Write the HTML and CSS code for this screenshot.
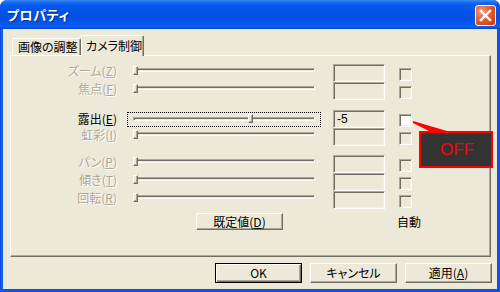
FILE: index.html
```html
<!DOCTYPE html>
<html lang="ja">
<head>
<meta charset="utf-8">
<title>プロパティ</title>
<link rel="stylesheet" href="styles.css">
</head>
<body>
<div class="win">
  <div class="titlebar">
    <span class="title">プロパティ</span>
    <div class="close">
      <svg width="21" height="21" viewBox="0 0 21 21">
        <path d="M6 6 L15 15 M15 6 L6 15" stroke="#fff" stroke-width="2.4" stroke-linecap="square"/>
      </svg>
    </div>
  </div>
  <div class="client">
    <div class="tabs">
      <div class="tab">画像の調整</div>
      <div class="tab active">カメラ制御</div>
    </div>
    <div class="panel">
      <div class="group">
        <div class="row dis">
          <div class="lbl">ズーム(<u>Z</u>)</div>
          <div class="slider"><div class="track"></div><div class="thumb"></div></div>
          <div class="edit"></div>
          <div class="cb"></div>
        </div>
        <div class="row dis">
          <div class="lbl">焦点(<u>F</u>)</div>
          <div class="slider"><div class="track"></div><div class="thumb"></div></div>
          <div class="edit"></div>
          <div class="cb"></div>
        </div>
      </div>
      <div class="group g2">
        <div class="row en">
          <div class="lbl">露出(<u>E</u>)</div>
          <div class="slider focus"><div class="track"></div><div class="thumb" style="left:120px"></div></div>
          <div class="edit">-5</div>
          <div class="cb"></div>
        </div>
        <div class="row dis">
          <div class="lbl">虹彩(<u>I</u>)</div>
          <div class="slider"><div class="track"></div><div class="thumb"></div></div>
          <div class="edit"></div>
          <div class="cb"></div>
        </div>
      </div>
      <div class="group g3">
        <div class="row dis">
          <div class="lbl">パン(<u>P</u>)</div>
          <div class="slider"><div class="track"></div><div class="thumb"></div></div>
          <div class="edit"></div>
          <div class="cb"></div>
        </div>
        <div class="row dis">
          <div class="lbl">傾き(<u>T</u>)</div>
          <div class="slider"><div class="track"></div><div class="thumb"></div></div>
          <div class="edit"></div>
          <div class="cb"></div>
        </div>
        <div class="row dis">
          <div class="lbl">回転(<u>R</u>)</div>
          <div class="slider"><div class="track"></div><div class="thumb"></div></div>
          <div class="edit"></div>
          <div class="cb"></div>
        </div>
      </div>
      <div class="footer">
        <div class="btn defbtn">既定値(<u>D</u>)</div>
        <div class="auto">自動</div>
      </div>
    </div>
    <div class="buttons">
      <div class="btn ok">OK</div>
      <div class="btn">キャンセル</div>
      <div class="btn">適用(<u>A</u>)</div>
    </div>
  </div>
  <svg class="tail" width="40" height="16" viewBox="0 0 40 16">
    <polygon points="3,3 37,13 19,13 3,5" fill="#ff0000"/>
  </svg>
  <div class="callout">OFF</div>
</div>
</body>
</html>
```

FILE: styles.css
```css
* { box-sizing: border-box; }
html, body { margin: 0; padding: 0; }
body {
  width: 500px;
  height: 292px;
  overflow: hidden;
  background: #fff;
  font-family: "Noto Sans CJK JP", "Liberation Sans", sans-serif;
  font-size: 12px;
  font-feature-settings: "palt";
  color: #000;
}
u { text-decoration: underline; text-underline-offset: 1px; }

.win {
  position: relative;
  width: 500px;
  height: 292px;
  background: linear-gradient(to right, #0845D8 0px, #166CF5 2px, #0A54E6 3px);
  border-radius: 7px 7px 0 0;
  display: flex;
  flex-direction: column;
  padding: 0 3px 3px 3px;
}
.titlebar {
  height: 29px;
  margin: 0 -3px;
  display: flex;
  align-items: center;
  padding: 0 4px 0 7px;
  border-radius: 7px 7px 0 0;
  background: linear-gradient(to bottom,
    #3C8EF5 0px, #1D6FF2 2px, #0859EC 5px, #0253E8 12px,
    #0050E6 18px, #0559EC 24px, #0A5FF0 27px, #0042C8 29px);
}
.title {
  flex: 1;
  color: #fff;
  font-weight: bold;
  font-size: 13px;
  letter-spacing: 0.5px;
  text-shadow: 1px 1px 0 #0B2D8F;
  line-height: 16px;
  margin-top: 1px;
}
.close {
  width: 21px;
  height: 21px;
  border: 1px solid #fff;
  border-radius: 3px;
  background: radial-gradient(circle at 30% 30%, #F3A182 0%, #E66A43 35%, #D8491C 70%, #C03A10 100%);
  display: flex;
  align-items: center;
  justify-content: center;
  margin-top: 2px;
}
.close svg { display: block; margin: -1px; }

.client {
  flex: 1;
  background: #ECE9D8;
  padding: 6px 6px 0 7px;
  display: flex;
  flex-direction: column;
}

.tabs {
  display: flex;
  align-items: flex-end;
  height: 21px;
  padding-left: 2px;
  margin-bottom: -1px;
  position: relative;
  z-index: 1;
}
.tab {
  height: 17px;
  margin-bottom: 1px;
  padding: 0 0 0 5px;
  width: 69px;
  line-height: 16px;
  background: #ECE9D8;
  border-top: 1px solid #fff;
  border-left: 1px solid #fff;
  border-right: 1px solid #716F64;
  box-shadow: inset -1px 0 0 #ACA899;
  border-radius: 2px 2px 0 0;
  white-space: nowrap;
}
.tab.active {
  height: 21px;
  margin-bottom: 0;
  width: 63px;
  padding-left: 4px;
  line-height: 19px;
  border-right-width: 1px;
}

.panel {
  width: 481px;
  height: 202px;
  border: 1px solid;
  border-color: #fff #716F64 #716F64 #fff;
  box-shadow: inset -1px -1px 0 #ACA899;
  padding-top: 8px;
  display: flex;
  flex-direction: column;
}
.group { display: flex; flex-direction: column; }
.g2 { margin-top: 10px; }
.g3 { margin-top: 9px; }

.row { display: flex; height: 18px; align-items: flex-start; }
.lbl {
  width: 107px;
  text-align: right;
  padding-right: 1px;
  line-height: 13px;
  white-space: nowrap;
}
.dis .lbl { color: #ACA899; text-shadow: 1px 1px 0 #fff; }
.en .lbl { line-height: 17px; }

.slider {
  width: 194px;
  height: 18px;
  margin-left: 9px;
  position: relative;
  padding: 4px 6px 0 6px;
}
.track {
  height: 4px;
  border-top: 1px solid #ACA899;
  border-left: 1px solid #ACA899;
  border-bottom: 1px solid #fff;
  border-right: 1px solid #fff;
  box-shadow: inset 1px 1px 0 #716F64;
  background: #ECE9D8;
}
.thumb {
  position: absolute;
  left: 6px;
  top: 2px;
  width: 5px;
  height: 9px;
  background: #ECE9D8;
  border-left: 1px solid #fff;
  border-top: 1px solid #fff;
  border-right: 1px solid #716F64;
  border-bottom: 1px solid #716F64;
  box-shadow: inset -1px -1px 0 #ACA899;
}
.slider.focus {
  margin-top: 2px;
  height: 15px;
  border: 1px dotted #000;
  padding: 4px 5px 0 5px;
}
.slider.focus .thumb { top: 1px; height: 9px; }

.edit {
  width: 52px;
  height: 18px;
  margin-left: 12px;
  border: 1px solid;
  border-color: #ACA899 #fff #fff #ACA899;
  box-shadow: inset 1px 1px 0 #716F64, inset -1px -1px 0 #F1EFE2;
  padding-left: 3px;
  font-family: "Liberation Sans", "Noto Sans CJK JP", sans-serif;
  font-size: 12px;
  line-height: 16px;
}
.cb {
  width: 13px;
  height: 13px;
  margin-left: 14px;
  margin-top: 4px;
  border: 1px solid;
  border-color: #ACA899 #fff #fff #ACA899;
  box-shadow: inset 1px 1px 0 #716F64, inset -1px -1px 0 #F1EFE2;
}
.en .cb { background: #fff; }

.footer {
  display: flex;
  align-items: flex-start;
  margin-top: 4px;
}
.btn {
  width: 87px;
  height: 20px;
  background: #ECE9D8;
  border: 1px solid;
  border-color: #fff #716F64 #716F64 #fff;
  box-shadow: inset -1px -1px 0 #ACA899;
  text-align: center;
  line-height: 17px;
  white-space: nowrap;
}
.defbtn { height: 17px; margin-left: 185px; line-height: 15px; }
.auto { margin-left: 114px; line-height: 16px; margin-top: 1px; }

.buttons {
  display: flex;
  justify-content: flex-end;
  gap: 8px;
  margin-top: 6px;
  margin-right: -1px;
}
.btn.ok {
  border: 1px solid #000;
  box-shadow: inset 1px 1px 0 #fff, inset -1px -1px 0 #716F64, inset -2px -2px 0 #ACA899;
}

.tail {
  position: absolute;
  left: 410px;
  top: 118px;
}
.callout {
  position: absolute;
  left: 419px;
  top: 131px;
  width: 74px;
  height: 37px;
  background: #333333;
  border: 2px solid #FF0000;
  color: #FF0000;
  font-family: "Liberation Sans", sans-serif;
  font-size: 17px;
  text-align: center;
  line-height: 33px;
  padding-left: 2px;
}
```
